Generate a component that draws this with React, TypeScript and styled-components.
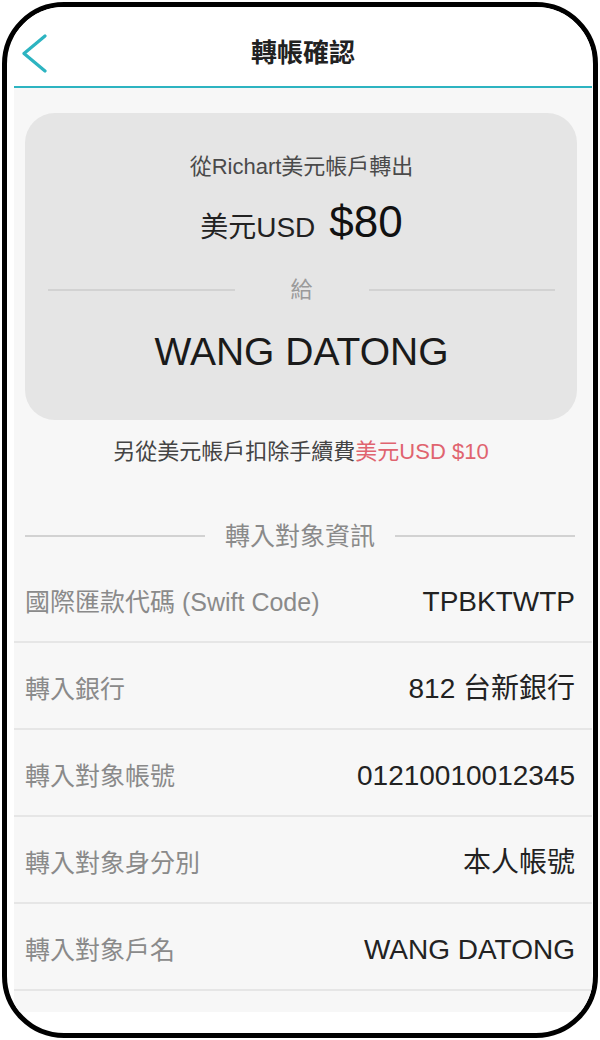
import React from "react";
import styled, { createGlobalStyle } from "styled-components";

const GlobalStyle = createGlobalStyle`
  html, body { margin: 0; padding: 0; background: #ffffff; }
  body {
    font-family: "Liberation Sans", "Noto Sans CJK TC", sans-serif;
    -webkit-font-smoothing: antialiased;
  }
  * { box-sizing: border-box; }
`;

const Page = styled.div`
  width: 600px;
  height: 1040px;
  padding: 2px;
  background: #ffffff;
`;

const Frame = styled.div`
  width: 596px;
  height: 1036px;
  border: 5px solid #000000;
  border-radius: 62px;
  overflow: hidden;
  background: #ffffff;
  padding: 0 1px 0 7px;
`;

const Screen = styled.div`
  display: flex;
  flex-direction: column;
  width: 578px;
`;

const Header = styled.header`
  display: grid;
  grid-template-columns: 70px 1fr 70px;
  align-items: center;
  height: 81px;
  padding-top: 12px;
  border-bottom: 2px solid #2db4c1;
  background: #ffffff;
`;

const BackButton = styled.button`
  display: flex;
  align-items: center;
  justify-content: flex-start;
  padding: 0 0 0 8px;
  border: none;
  background: transparent;
  height: 44px;
`;

const Title = styled.h1`
  margin: 0;
  text-align: center;
  font-size: 26px;
  line-height: 34px;
  font-weight: 700;
  color: #222222;
`;

const Body = styled.main`
  display: flex;
  flex-direction: column;
  background: #f7f7f7;
  padding: 25px 15px 21px 11px;
`;

const Card = styled.section`
  display: flex;
  flex-direction: column;
  align-items: stretch;
  background: #e5e5e5;
  border-radius: 30px;
  padding: 39px 22px 43px 23px;
  height: 307px;
`;

const FromLine = styled.div`
  text-align: center;
  font-size: 22px;
  line-height: 30px;
  color: #4a4a4a;
`;

const AmountRow = styled.div`
  display: flex;
  justify-content: center;
  align-items: baseline;
  gap: 14px;
  margin-top: 15px;
  height: 50px;
  line-height: 50px;
`;

const Currency = styled.span`
  font-size: 28px;
  color: #222222;
`;

const Amount = styled.span`
  font-size: 44px;
  color: #111111;
`;

const Divider = styled.div<{ $space: number; $top: number }>`
  display: flex;
  align-items: center;
  margin-top: ${(p) => p.$top}px;
  height: 30px;
  gap: ${(p) => p.$space}px;
`;

const Rule = styled.span`
  flex: 1;
  height: 2px;
  background: #d2d2d2;
`;

const DividerText = styled.span<{ $size: number; $color: string }>`
  font-size: ${(p) => p.$size}px;
  line-height: 30px;
  color: ${(p) => p.$color};
`;

const Payee = styled.div`
  margin-top: 22px;
  text-align: center;
  font-size: 39px;
  line-height: 50px;
  color: #1a1a1a;
`;

const FeeNote = styled.p`
  margin: 17px 0 0;
  text-align: center;
  font-size: 22px;
  line-height: 30px;
  color: #444444;
`;

const FeeAmount = styled.span`
  color: #e0646f;
`;

const Section = styled.div`
  margin: 54px 2px 5px 0;
`;

const InfoList = styled.dl`
  margin: 0 -15px 0 -11px;
  display: flex;
  flex-direction: column;
`;

const InfoRow = styled.div`
  display: flex;
  align-items: center;
  justify-content: space-between;
  height: 87px;
  padding: 6px 17px 0 11px;
  border-bottom: 2px solid #e6e6e6;
`;

const Label = styled.dt`
  font-size: 25px;
  line-height: 34px;
  color: #8a8a8a;
`;

const Value = styled.dd`
  margin: 0;
  font-size: 28px;
  line-height: 34px;
  color: #222222;
`;

const rows: [string, string][] = [
  ["國際匯款代碼 (Swift Code)", "TPBKTWTP"],
  ["轉入銀行", "812 台新銀行"],
  ["轉入對象帳號", "01210010012345"],
  ["轉入對象身分別", "本人帳號"],
  ["轉入對象戶名", "WANG DATONG"],
];

export default function App() {
  return (
    <>
      <GlobalStyle />
      <Page>
        <Frame>
          <Screen>
            <Header>
              <BackButton aria-label="返回">
                <svg width="26" height="40" viewBox="0 0 26 40">
                  <polyline
                    points="23,3 2,20.5 23,38"
                    fill="none"
                    stroke="#2db4c1"
                    strokeWidth="3.2"
                    strokeLinecap="round"
                    strokeLinejoin="round"
                  />
                </svg>
              </BackButton>
              <Title>轉帳確認</Title>
              <span />
            </Header>
            <Body>
              <Card>
                <FromLine>從Richart美元帳戶轉出</FromLine>
                <AmountRow>
                  <Currency>美元USD</Currency>
                  <Amount>$80</Amount>
                </AmountRow>
                <Divider $space={56} $top={28}>
                  <Rule />
                  <DividerText $size={22} $color="#9a9a9a">給</DividerText>
                  <Rule />
                </Divider>
                <Payee>WANG DATONG</Payee>
              </Card>
              <FeeNote>
                另從美元帳戶扣除手續費<FeeAmount>美元USD $10</FeeAmount>
              </FeeNote>
              <Section>
                <Divider $space={20} $top={0}>
                  <Rule />
                  <DividerText $size={25} $color="#8a8a8a">轉入對象資訊</DividerText>
                  <Rule />
                </Divider>
              </Section>
              <InfoList>
                {rows.map(([label, value]) => (
                  <InfoRow key={label}>
                    <Label>{label}</Label>
                    <Value>{value}</Value>
                  </InfoRow>
                ))}
              </InfoList>
            </Body>
          </Screen>
        </Frame>
      </Page>
    </>
  );
}
